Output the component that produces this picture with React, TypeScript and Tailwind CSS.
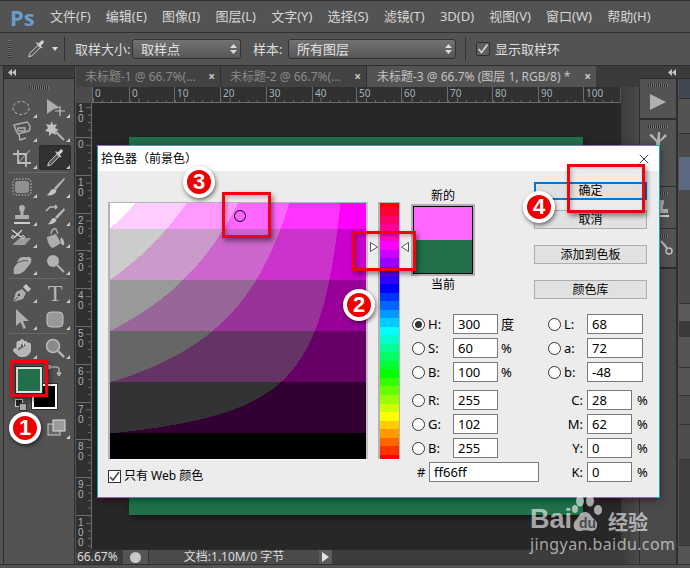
import type { ReactNode } from 'react';
import { Hand, X } from 'lucide-react';

const G = '#adadad';

const q = (v: number) => Math.round(v * 5) * 51;

// web-safe colour field for hue 300
const buildField = () => {
  const paths: Record<string, string> = {};
  for (let y = 0; y < 256; y++) {
    const v = 1 - (y + 0.5) / 256;
    let start = 0;
    let prev = '';
    for (let x = 0; x <= 256; x++) {
      const s = (x + 0.5) / 256;
      const c = x === 256 ? '' : `rgb(${q(v)},${q(v * (1 - s))},${q(v)})`;
      if (c !== prev) {
        if (prev) paths[prev] = (paths[prev] || '') + `M${start} ${y}h${x - start}v1h-${x - start}z`;
        start = x;
        prev = c;
      }
    }
  }
  return Object.entries(paths);
};

const hueRgb = (h: number) => {
  const f = (n: number) => {
    const k = (n + h / 60) % 6;
    return 1 - Math.max(0, Math.min(k, 4 - k, 1));
  };
  return `rgb(${q(f(5))},${q(f(3))},${q(f(1))})`;
};

const buildHue = () => {
  const runs: { y: number; h: number; c: string }[] = [];
  for (let y = 0; y < 256; y++) {
    const c = hueRgb(360 * (1 - (y + 0.5) / 256) % 360);
    const last = runs[runs.length - 1];
    if (last && last.c === c) last.h += 1;
    else runs.push({ y, h: 1, c });
  }
  return runs;
};

const field = buildField();
const hue = buildHue();

const Ico = ({ children, size = 22 }: { children: ReactNode; size?: number }) => (
  <svg width={size} height={size} viewBox="0 0 22 22">
    {children}
  </svg>
);

const Dropper = ({ size = 22 }: { size?: number }) => (
  <Ico size={size}>
    <path d="M3 19.5l1-3.5 9-9 2.5 2.5-9 9z" fill="#555" stroke="#ddd" strokeWidth="1" />
    <path d="M11.5 5l5.5 5.5 1.2-1.2-2-2 3-3a1.7 1.7 0 0 0-2.4-2.4l-3 3-2-2z" fill="#d0d0d0" />
  </Ico>
);

const icons: Record<string, ReactNode> = {
  marquee: (
    <Ico>
      <ellipse cx="10" cy="11" rx="8" ry="6.5" fill="none" stroke="#b8b8b8" strokeDasharray="3 2" />
    </Ico>
  ),
  move: (
    <Ico>
      <path d="M3 2v15l7-5 6-1z" fill={G} />
      <path d="M16 9v10M11 14h10" stroke="#c0c0c0" strokeWidth="1.2" />
    </Ico>
  ),
  lasso: (
    <Ico>
      <path d="M3 5l13-3c3 2 4 6 2 9l-11 3c-2-3-3-6-4-9z" fill="none" stroke={G} strokeWidth="1.5" />
      <path d="M7 8h7v3H9a2 2 0 0 1-2-3zM8 14l1 6 6-2" fill="none" stroke={G} strokeWidth="1.5" />
    </Ico>
  ),
  wand: (
    <Ico>
      <path d="M10 10l10 10" stroke={G} strokeWidth="2.4" />
      <path d="M8 1l1 4 4-1-2 4 4 2-4 1 1 4-4-2-3 3 0-4-4-1 3-3-2-4 4 1z" fill="#c0c0c0" />
    </Ico>
  ),
  crop: (
    <Ico>
      <path d="M7 3v13h13M2 7h13v13" fill="none" stroke="#bcbcbc" strokeWidth="1.8" />
      <path d="M7 16L19 3" stroke="#bcbcbc" strokeWidth="1" />
    </Ico>
  ),
  healing: (
    <Ico>
      <rect x="4" y="5" width="14" height="12" rx="3" fill="#909090" />
      <rect x="2" y="3" width="18" height="16" rx="3" fill="none" stroke="#c4c4c4" strokeDasharray="1.5 1.5" />
    </Ico>
  ),
  brush: (
    <Ico>
      <path d="M20 2L10 12l2 2L21 3z" fill="#b4b4b4" />
      <path d="M2 19c4 0 3-6 8-6 2 0 3 2 2 3-2 3-6 4-10 3z" fill="#c4c4c4" />
    </Ico>
  ),
  stamp: (
    <Ico>
      <path d="M8 4a3 3 0 0 1 6 0c0 2-1.5 3-1.5 5v2H18v4H4v-4h5.500V9C9.500 7 8 6 8 4z" fill={G} />
      <path d="M3 18h16v2H3z" fill="#cccccc" />
    </Ico>
  ),
  history: (
    <Ico>
      <path d="M20 4L11 13l2 2 8-9z" fill="#b4b4b4" />
      <path d="M3 20c4 0 3-6 7-6 2 0 3 2 2 3-1 2-5 4-9 3z" fill="#c4c4c4" />
      <path d="M13 3H6L2 7M13 3l-2-2M13 3l-2 2" fill="none" stroke="#bcbcbc" strokeWidth="1.4" />
    </Ico>
  ),
  eraser: (
    <Ico>
      <path d="M2 17l7-6h11l-6 7H3z" fill="#9c9c9c" />
      <path d="M1 3l9 7M11 3L4 10" stroke="#dcdcdc" strokeWidth="1.2" />
      <circle cx="2" cy="10" r="1.400" fill="none" stroke="#dcdcdc" />
      <circle cx="12" cy="10" r="1.400" fill="none" stroke="#dcdcdc" />
    </Ico>
  ),
  bucket: (
    <Ico>
      <path d="M3 10l9-3 5 9-8 5c-3 0-6-7-6-11z" fill={G} />
      <path d="M7 7c0-4 3-6 5-5l2 5" fill="none" stroke={G} strokeWidth="1.4" />
      <path d="M17 10c2 2 4 5 3 8h-2c-1-2-2-5-1-8z" fill="#bcbcbc" />
    </Ico>
  ),
  smudge: (
    <Ico>
      <path d="M3 21c-1-4 0-8 3-10 0-2 1-6 5-7h7c3 0 3 5 1 7l-4 5c-2 3-6 6-12 5z" fill={G} />
      <path d="M6 10c4-2 8-3 11-2" stroke="#555" fill="none" />
    </Ico>
  ),
  dodge: (
    <Ico>
      <circle cx="9" cy="8" r="6" fill="#b2b2b2" />
      <path d="M13 12l7 7" stroke={G} strokeWidth="2.2" />
    </Ico>
  ),
  pen: (
    <Ico>
      <path d="M2 20l3-10 6-3 4 4-3 6z" fill={G} />
      <path d="M12 5l3-3 5 5-3 3z" fill="#c4c4c4" />
      <path d="M2 20l5-5" stroke="#444" />
      <circle cx="8" cy="13" r="1.200" fill="#444" />
    </Ico>
  ),
  arrow: (
    <Ico>
      <path d="M5 1v17l4.500-4 3 7 2.500-1-3-7H18z" fill={G} />
    </Ico>
  ),
  shape: (
    <Ico>
      <rect x="3" y="4" width="16" height="15" rx="4" fill="#989898" stroke="#c4c4c4" />
    </Ico>
  ),
  zoom: (
    <Ico>
      <circle cx="9" cy="9" r="6.500" fill="#8a8a8a" stroke="#b8b8b8" strokeWidth="1.600" />
      <path d="M14 14l6 6" stroke="#b8b8b8" strokeWidth="2.400" />
    </Ico>
  ),
};

const Corner = () => (
  <span className="absolute right-[1px] bottom-[1px] w-0 h-0 border-l-[4px] border-l-transparent border-b-[4px] border-b-[#c8c8c8]" />
);

const Tool = ({ children, active }: { children: ReactNode; active?: boolean }) => (
  <div
    className={
      active
        ? 'relative w-[32px] h-full flex items-center justify-center rounded-[3px] bg-[#323232] shadow-[inset_0_0_2px_#1c1c1c]'
        : 'relative w-[32px] h-full flex items-center justify-center'
    }
  >
    {children}
    <Corner />
  </div>
);

const Collapse = () => (
  <svg width="8" height="7" viewBox="0 0 8 7">
    <path d="M4 0v7L0 3.500zM8 0v7L4 3.500z" fill="#c4c4c4" />
  </svg>
);

const Grip = () => (
  <div className="w-[20px] h-[3px] bg-[repeating-linear-gradient(90deg,#2e2e2e_0_1px,#777_1px_2px)]" />
);

const Sep = () => <div className="h-[1px] mx-[3px] my-[2px] bg-[#333] border-b border-[#666]" />;

const Toolbox = () => (
  <div className="w-[72px] ml-[3px] border-x border-[#2d2d2d] bg-[#535353] flex flex-col">
    <div className="h-[13px] bg-[#3b3b3b] flex items-center pl-[4px] border-b border-[#2b2b2b]">
      <Collapse />
    </div>
    <div className="h-[17px] flex justify-center items-center pr-[1px]">
      <Grip />
    </div>
    <div className="flex flex-col pl-[2px] pr-[3px]">
      <div className="flex justify-between h-[23px]"><Tool>{icons.marquee}</Tool><Tool>{icons.move}</Tool></div>
      <div className="flex justify-between h-[24px]"><Tool>{icons.lasso}</Tool><Tool>{icons.wand}</Tool></div>
      <div className="flex justify-between h-[25px] mt-[2px]">
        <Tool>{icons.crop}</Tool>
        <Tool active><Dropper size={20} /></Tool>
      </div>
      <Sep />
      <div className="flex justify-between h-[24px]"><Tool>{icons.healing}</Tool><Tool>{icons.brush}</Tool></div>
      <div className="flex justify-between h-[24px] mt-[4px]"><Tool>{icons.stamp}</Tool><Tool>{icons.history}</Tool></div>
      <div className="flex justify-between h-[22px]"><Tool>{icons.eraser}</Tool><Tool>{icons.bucket}</Tool></div>
      <div className="flex justify-between h-[24px] mt-[3px]"><Tool>{icons.smudge}</Tool><Tool>{icons.dodge}</Tool></div>
      <Sep />
      <div className="flex justify-between h-[23px]">
        <Tool>{icons.pen}</Tool>
        <Tool><span className="font-['Liberation_Serif',serif] text-[24px] leading-none text-[#b4b4b4]">T</span></Tool>
      </div>
      <div className="flex justify-between h-[24px] mt-[3px]"><Tool>{icons.arrow}</Tool><Tool>{icons.shape}</Tool></div>
      <Sep />
      <div className="flex justify-between h-[24px]">
        <Tool><Hand size={20} fill="#b4b4b4" stroke="#d4d4d4" strokeWidth={1.1} /></Tool>
        <Tool>{icons.zoom}</Tool>
      </div>
    </div>
    {/* colour chips overlap each other */}
    <div className="relative h-[78px]">
      <div className="absolute left-[28px] top-[24px] w-[25px] h-[25px] bg-black border-2 border-white outline outline-[#2d2d2d]" />
      <div className="absolute left-[12px] top-[7px] w-[26px] h-[26px] bg-[#21704a] border-2 border-[#e4e4e4] outline outline-[#2d2d2d]" />
      <svg className="absolute left-[42px] top-[4px]" width="16" height="14" viewBox="0 0 16 14">
        <path d="M3 3h8a2 2 0 0 1 2 2v5M1 3l3-2v4zM11 9l2 3 2-3z" fill="none" stroke="#d0d0d0" />
      </svg>
      <div className="absolute left-[11px] top-[39px] w-[8px] h-[8px] bg-[#222] border border-[#ccc]" />
      <div className="absolute left-[15px] top-[43px] w-[8px] h-[8px] bg-[#aaa] border border-[#333]" />
      <svg className="absolute left-[42px] top-[59px]" width="24" height="20" viewBox="0 0 24 20">
        <rect x="2" y="5" width="12" height="11" fill="#666" stroke="#ccc" />
        <rect x="7" y="1" width="12" height="11" fill="#9a9a9a" stroke="#ddd" />
        <path d="M24 16v4h-4z" fill="#d0d0d0" />
      </svg>
    </div>
  </div>
);

const topTicks = [
  { x: 0, t: '0' }, { x: 37, t: '0' }, { x: 82, t: '10' }, { x: 128, t: '20' }, { x: 174, t: '30' }, { x: 220, t: '40' },
  { x: 264, t: '50' }, { x: 309, t: '60' }, { x: 355, t: '70' }, { x: 400, t: '80' }, { x: 446, t: '90' }, { x: 491, t: '100' },
];

const RulerTop = () => (
  <svg width="528" height="16" className="block bg-[#303030]">
    <path d="M0 15.500H528" stroke="#6c6c6c" />
    {Array.from({ length: 59 }).map((_, i) => (
      <path key={i} d={`M${i * 9.1 + 1.500} 15V${i % 5 === 0 ? 11 : 13}`} stroke="#6c6c6c" />
    ))}
    {topTicks.map((m) => (
      <g key={m.x}>
        <path d={`M${m.x + 0.500} 0V16`} stroke="#6c6c6c" />
        <text x={m.x + 3} y="10" fontSize="10" fill="#a3b0bc">{m.t}</text>
      </g>
    ))}
  </svg>
);

const leftTicks = [
  { y: -2, t: '10' }, { y: 34, t: '0' }, { y: 72, t: '10' }, { y: 110, t: '20' }, { y: 147, t: '30' }, { y: 185, t: '40' },
  { y: 223, t: '50' }, { y: 261, t: '60' }, { y: 299, t: '70' }, { y: 336, t: '80' }, { y: 374, t: '90' }, { y: 412, t: '100' },
];

const RulerLeft = () => (
  <svg width="16" height="447" className="block bg-[#303030]">
    <path d="M15.500 0V447" stroke="#6c6c6c" />
    {Array.from({ length: 60 }).map((_, i) => (
      <path key={i} d={`M15 ${i * 7.56 + 4.500}H${i % 5 === 0 ? 10 : 12}`} stroke="#6c6c6c" />
    ))}
    {leftTicks.map((m) => (
      <g key={m.y}>
        <path d={`M0 ${m.y + 0.500}H16`} stroke="#6c6c6c" />
        <text fontSize="10" fill="#a3b0bc" fontFamily="Liberation Sans">
          {m.t.split('').map((d, i) => (
            <tspan key={i} x="2" y={m.y + 11 + i * 10}>{d}</tspan>
          ))}
        </text>
      </g>
    ))}
  </svg>
);

const TabClose = () => <span className="text-[12px] leading-none font-bold text-[#c8c8c8]">×</span>;

const DocArea = () => (
  <div className="w-[564px] flex flex-col ml-[1px]">
    <div className="h-[21px] flex bg-[#3b3b3b] text-[12px] leading-none">
      <div className="w-[145px] flex items-center justify-between pl-[9px] pr-[5px] bg-[#424242] border-r border-[#2d2d2d] text-[#8a8a8a]">
        <span className="whitespace-nowrap">未标题-1 @ 66.7%(...</span><TabClose />
      </div>
      <div className="w-[146px] flex items-center justify-between pl-[9px] pr-[5px] bg-[#424242] border-r border-[#2d2d2d] text-[#8a8a8a]">
        <span className="whitespace-nowrap">未标题-2 @ 66.7%(...</span><TabClose />
      </div>
      <div className="w-[229px] flex items-center justify-between pl-[10px] pr-[5px] bg-[#535353] text-[#c4c4c4]">
        <span className="whitespace-nowrap">未标题-3 @ 66.7% (图层 1, RGB/8) *</span><TabClose />
      </div>
    </div>
    <div className="flex-1 flex min-h-0">
      <div className="w-[545px] flex flex-col">
        <div className="flex">
          <div className="w-[16px] h-[16px] bg-[#4b4b4b] bg-[radial-gradient(#6a6a6a_0.5px,transparent_0.5px)] bg-[length:2px_2px]" />
          <RulerTop />
        </div>
        <div className="flex flex-1 min-h-0">
          <RulerLeft />
          <div className="flex-1 bg-[#272727] pl-[37px] pt-[34px]">
            <div className="w-[454px] h-[378px] bg-[#21704a] shadow-[2px_3px_6px_rgba(0,0,0,0.5)]" />
          </div>
        </div>
        <div className="h-[15px] flex items-center bg-[#3c3c3c] text-[12px] leading-none text-[#dcdcdc] border-t border-[#2d2d2d]">
          <div className="w-[47px] pl-[1px] bg-[#3a3a3a] h-full flex items-center">66.67%</div>
          <div className="w-[25px] h-full flex items-center justify-center bg-[#555]">
            <span className="w-[11px] h-[11px] rounded-full bg-[#c8c8c8] block" />
          </div>
          <div className="w-[171px] h-full flex items-center justify-center border-l border-[#333] bg-[#4a4a4a] whitespace-nowrap">文档:1.10M/0 字节</div>
          <div className="w-[13px] h-full flex items-center justify-center bg-[#5c5c5c]">
            <span className="w-0 h-0 border-y-[5px] border-y-transparent border-l-[7px] border-l-[#e4e4e4]" />
          </div>
        </div>
      </div>
      <div className="w-[19px] bg-gradient-to-r from-[#3b3b3b] to-[#4b4b4b] border-r border-[#2d2d2d]" />
    </div>
  </div>
);

const RightPanels = () => (
  <div className="flex-1 flex flex-col">
    <div className="h-[13px] bg-[#3b3b3b] flex items-center pl-[28px] border-b border-[#2b2b2b]">
      <Collapse />
    </div>
    <div className="flex-1 flex">
      <div className="w-[38px] flex flex-col border-r-2 border-[#2e2e2e] bg-[#4a4a4a]">
        <div className="h-[41px] bg-[#535353] border-b-2 border-[#2e2e2e] flex flex-col items-center pt-[5px]">
          <Grip />
          <svg className="mt-[5px]" width="20" height="20" viewBox="0 0 20 20"><path d="M2 2l16 8-16 8z" fill="#b0b0b0" /></svg>
        </div>
        <div className="h-[67px] bg-[#535353] border-b border-[#2e2e2e] flex flex-col items-center pt-[5px]">
          <Grip />
          <svg className="mt-[3px]" width="22" height="22" viewBox="0 0 22 22">
            <path d="M9 20V11L2 4l3-1 5 6 1-8 2 0 0 8 5-6 2 2-7 6v9z" fill="#b4b4b4" />
          </svg>
        </div>
        <div className="h-[42px] bg-[#535353] border-b border-[#2e2e2e] flex flex-col items-center pt-[5px]">
          <Grip />
          <svg className="mt-[5px] ml-[6px]" width="22" height="22" viewBox="0 0 22 22"><path d="M8 2a3 3 0 0 1 6 0c0 2-1 3-1 5v2h5v4H4V9h5V7C9 5 8 4 8 2z" fill={G} /><path d="M3 15h16v2H3z" fill="#ccc" /></svg>
        </div>
        <div className="h-[40px] bg-[#535353] border-b-2 border-[#2e2e2e] flex flex-col items-center pt-[5px]">
          <Grip />
          <svg className="mt-[3px] ml-[18px]" width="14" height="16" viewBox="0 0 14 16"><circle cx="9" cy="11" r="3" fill="none" stroke="#bbb" strokeWidth="1.500" /><path d="M1 1l6 7" stroke="#bbb" strokeWidth="2" /></svg>
        </div>
        <div className="flex-1" />
      </div>
      <div className="flex-1 ml-[1px] flex flex-col bg-[#4a4a4a]">
        <div className="h-[19px] bg-[#3f4752]" />
        <div className="h-[36px] bg-[#535353] border-y border-[#2e2e2e]" />
        <div className="h-[23px]" />
        <div className="h-[33px] bg-[#5b6a80]" />
        <div className="h-[113px]" />
        <div className="h-[18px] bg-[#5a5a5a] border-t border-[#333]" />
        <div className="h-[16px] bg-[#3a3a3a]" />
        <div className="h-[31px] bg-[#555] border-b border-[#333]" />
        <div className="h-[28px] bg-[#555] border-b border-[#333]" />
        <div className="h-[29px] bg-[#4d4d4d] border-b border-[#333]" />
        <div className="h-[35px] bg-[#4d4d4d] border-b border-[#333]" />
        <div className="h-[85px] bg-[#3e3e3e]" />
        <div className="flex-1 bg-[#555] border-t border-[#333]" />
      </div>
    </div>
  </div>
);

const Select = ({ w, label }: { w: string; label: string }) => (
  <div className={`${w} h-[20px] flex items-center justify-between pl-[8px] pr-[3px] rounded-[3px] border border-[#333] bg-gradient-to-b from-[#727272] to-[#565656] text-[#e0e0e0]`}>
    <span>{label}</span>
    <svg width="7" height="10" viewBox="0 0 7 10"><path d="M0 4l3.500-4 3.500 4zM0 6l3.500 4 3.500-4z" fill="#dcdcdc" /></svg>
  </div>
);

const Radio = ({ on }: { on?: boolean }) => (
  <span className="w-[13px] h-[13px] rounded-full border border-[#333] bg-white flex items-center justify-center shrink-0">
    {on && <span className="w-[7px] h-[7px] rounded-full bg-[#333]" />}
  </span>
);

const Num = ({ v, w }: { v: string; w: string }) => (
  <div className={`${w} h-[20px] border border-[#7a7a7a] bg-white text-[13px] leading-[19px] pl-[4px] shrink-0`}>{v}</div>
);

const RadioRow = ({ k, v, unit, on }: { k: string; v: string; unit?: string; on?: boolean }) => (
  <div className="flex items-center h-[20px] mb-[4px]">
    <Radio on={on} />
    <span className="w-[28px] pl-[3px] text-[13px] leading-none">{k}</span>
    <Num v={v} w="w-[45px]" />
    {unit && <span className="ml-[3px] text-[13px] leading-none">{unit}</span>}
  </div>
);

const LabRow = ({ k, v }: { k: string; v: string }) => (
  <div className="flex items-center h-[20px] mb-[4px]">
    <Radio />
    <span className="w-[26px] pl-[3px] text-[13px] leading-none">{k}</span>
    <Num v={v} w="w-[56px]" />
  </div>
);

const CmykRow = ({ k, v }: { k: string; v: string }) => (
  <div className="flex items-center h-[20px] mb-[4px]">
    <span className="w-[39px] pr-[4px] text-right text-[13px] leading-none">{k}</span>
    <Num v={v} w="w-[45px]" />
    <span className="ml-[5px] text-[13px] leading-none">%</span>
  </div>
);

const Btn = ({ children, primary, cls }: { children: ReactNode; primary?: boolean; cls: string }) => (
  <div
    className={`${cls} w-[113px] flex items-center justify-center bg-[#e1e1e1] text-[12px] leading-none text-black ${
      primary ? 'h-[18px] border-2 border-[#0078d7]' : 'h-[19px] border border-[#adadad]'
    }`}
  >
    {children}
  </div>
);

const ColorDialog = () => (
  <div className="absolute left-[97px] top-[145px] w-[563px] h-[353px] border border-[#17a9b8] bg-[#ececec] text-black shadow-[0_2px_8px_rgba(0,0,0,0.45)] flex flex-col">
    <div className="h-[25px] shrink-0 bg-white flex items-center justify-between pl-[3px] pr-[7px] text-[12px] leading-none">
      <span>拾色器（前景色）</span>
      <X size={16} strokeWidth={1.2} className="text-[#111]" />
    </div>
    <div className="flex-1 flex pl-[10px]">
      <div className="w-[260px] pt-[31px]">
        <div className="relative w-[260px] h-[258px] border-2 border-[#b4b4b4] border-r-[#c4c4c4] border-b-[#fafafa] border-t-[1px]">
          <svg width="256" height="256" className="block" shapeRendering="crispEdges">
            {field.map(([c, d]) => <path key={c} d={d} fill={c} />)}
          </svg>
          <span className="absolute left-[124px] top-[7px] w-[12px] h-[12px] rounded-full border border-black" />
        </div>
        <div className="flex items-center mt-[9px] h-[14px] text-[12px] leading-none">
          <span className="w-[13px] h-[13px] border border-[#333] bg-white flex items-center justify-center">
            <svg width="11" height="11" viewBox="0 0 11 11"><path d="M1 6l3 3 6-8" fill="none" stroke="#444" strokeWidth="1.500" /></svg>
          </span>
          <span className="ml-[3px] whitespace-pre">只有 Web 颜色</span>
        </div>
      </div>

      <div className="relative w-[22px] ml-[10px] mt-[31px] h-[258px] border-2 border-[#b4b4b4] border-t-[1px] border-b-[#fafafa] border-r-[1px]">
        <svg width="19" height="256" className="block" shapeRendering="crispEdges">
          {hue.map((r) => <rect key={r.y} x="0" y={r.y} width="19" height={r.h} fill={r.c} />)}
        </svg>
        <svg className="absolute left-[-11px] top-[38px]" width="10" height="12" viewBox="0 0 10 12"><path d="M1.500 1.500L8.500 6l-7 4.500z" fill="#fff" stroke="#555" /></svg>
        <svg className="absolute left-[20px] top-[38px]" width="10" height="12" viewBox="0 0 10 12"><path d="M8.500 1.500L1.500 6l7 4.500z" fill="#fff" stroke="#555" /></svg>
      </div>

      <div className="flex-1 pl-[12px] flex flex-col">
        <div className="flex h-[143px]">
          <div className="w-[62px] pt-[19px] flex flex-col items-center text-[12px] leading-none">
            <span>新的</span>
            <div className="mt-[4px] w-[60px] h-[68px] border border-black flex flex-col outline-2 outline-[#b0b0b0]">
              <div className="h-[33px] bg-[#ff66ff]" />
              <div className="flex-1 bg-[#21704a]" />
            </div>
            <span className="mt-[5px]">当前</span>
          </div>
          <div className="ml-[60px] pt-[11px] flex flex-col">
            <Btn primary cls="">确定</Btn>
            <Btn cls="mt-[10px]">取消</Btn>
            <Btn cls="mt-[16px]">添加到色板</Btn>
            <Btn cls="mt-[16px]">颜色库</Btn>
          </div>
        </div>
        <div className="flex">
          <div className="w-[136px]">
            <RadioRow k="H:" v="300" unit="度" on />
            <RadioRow k="S:" v="60" unit="%" />
            <RadioRow k="B:" v="100" unit="%" />
            <div className="h-[4px]" />
            <RadioRow k="R:" v="255" />
            <RadioRow k="G:" v="102" />
            <RadioRow k="B:" v="255" />
            <div className="flex items-center h-[20px] mt-[4px]">
              <span className="w-[17px] pl-[5px] text-[13px] leading-none">#</span>
              <Num v="ff66ff" w="w-[110px]" />
            </div>
          </div>
          <div>
            <LabRow k="L:" v="68" />
            <LabRow k="a:" v="72" />
            <LabRow k="b:" v="-48" />
            <div className="h-[4px]" />
            <CmykRow k="C:" v="28" />
            <CmykRow k="M:" v="62" />
            <CmykRow k="Y:" v="0" />
            <CmykRow k="K:" v="0" />
          </div>
        </div>
      </div>
    </div>
  </div>
);

const boxCls = 'absolute border-[3px] border-[#ee0410] shadow-[2px_3px_5px_rgba(0,0,0,0.45),inset_2px_2px_4px_rgba(0,0,0,0.25)]';
const badgeCls =
  "absolute w-[32px] h-[32px] rounded-full bg-[#ee0000] border-[4px] border-white shadow-[1px_2px_4px_rgba(0,0,0,0.55)] flex items-center justify-center text-white font-['Liberation_Sans',sans-serif] font-bold text-[22px] leading-none";

const Watermark = () => (
  <div className="absolute left-[530px] top-[495px] w-[125px] h-[60px] text-white/60 font-['Liberation_Sans','Noto_Sans_CJK_SC',sans-serif] font-bold">
    <div className="flex items-end h-[40px]">
      <span className="text-[27px] leading-none pb-[2px]">Bai</span>
      <svg width="36" height="40" viewBox="0 0 36 40" className="shrink-0">
        <g fill="rgba(255,255,255,0.6)">
          <ellipse cx="8" cy="6" rx="4" ry="5.500" />
          <ellipse cx="18" cy="6" rx="4" ry="5.500" />
          <ellipse cx="26" cy="15" rx="4" ry="5" />
          <ellipse cx="3" cy="14" rx="3" ry="4" />
          <path d="M13 17c5 0 6 5 11 9 3 4 0 11-5 10-4-1-7-1-11 0-6 1-8-6-5-10 4-3 4-9 10-9z" />
        </g>
        <text x="7" y="33" fontSize="14" fill="#4a4a4a" fontFamily="Liberation Sans">du</text>
      </svg>
      <span className="text-[20px] leading-none pb-[2px] whitespace-nowrap">经验</span>
    </div>
    <div className="text-[16px] leading-none mt-[1px] font-normal tracking-[0.4px] font-['Noto_Sans',sans-serif] whitespace-nowrap">jingyan.baidu.com</div>
  </div>
);

export default function App() {
  return (
    <div className="relative w-[690px] h-[568px] overflow-hidden bg-[#535353] flex flex-col font-['Noto_Sans','Noto_Sans_CJK_SC',sans-serif]">
      <div className="h-[33px] shrink-0 flex items-center border-t border-[#2e2e2e] border-b border-b-[#2e2e2e] text-[13px] leading-none text-[#d6d6d6]">
        <span className="ml-[10px] w-[40px] font-['Open_Sans',sans-serif] font-bold text-[22px] text-[#6b9dcc]">Ps</span>
        <div className="flex gap-[15.2px] whitespace-nowrap">
          <span>文件(F)</span><span>编辑(E)</span><span>图像(I)</span><span>图层(L)</span><span>文字(Y)</span>
          <span>选择(S)</span><span>滤镜(T)</span><span>3D(D)</span><span>视图(V)</span><span>窗口(W)</span><span>帮助(H)</span>
        </div>
      </div>

      <div className="h-[33px] shrink-0 flex items-center border-b border-[#2e2e2e] text-[13px] leading-none text-[#dedede]">
        <div className="ml-[8px] w-[3px] h-[18px] bg-[repeating-linear-gradient(0deg,#2e2e2e_0_1px,#777_1px_2px)]" />
        <div className="ml-[15px]"><Dropper size={20} /></div>
        <span className="ml-[6px] w-0 h-0 border-x-[3.5px] border-x-transparent border-t-[4px] border-t-[#dcdcdc]" />
        <div className="ml-[6px] w-[1px] h-[24px] bg-[#333]" />
        <span className="ml-[10px] w-[57px] whitespace-nowrap">取样大小:</span>
        <Select w="w-[109px]" label="取样点" />
        <span className="ml-[12px] w-[35px] whitespace-nowrap">样本:</span>
        <Select w="w-[168px]" label="所有图层" />
        <div className="ml-[9px] w-[1px] h-[24px] bg-[#333]" />
        <span className="ml-[10px] w-[14px] h-[14px] rounded-[2px] border border-[#2e2e2e] bg-[#5f5f5f] flex items-center justify-center">
          <svg width="12" height="12" viewBox="0 0 12 12"><path d="M1.500 6l3 3.500 6-8" fill="none" stroke="#d8d8d8" strokeWidth="1.600" /></svg>
        </span>
        <span className="ml-[5px] whitespace-nowrap">显示取样环</span>
      </div>

      <div className="flex-1 flex min-h-0 mb-[3px] border-b border-[#2e2e2e]">
        <Toolbox />
        <DocArea />
        <RightPanels />
      </div>

      <ColorDialog />

      <div className={`${boxCls} left-[10px] top-[360px] w-[38px] h-[37px]`} />
      <div className={`${boxCls} left-[352px] top-[231px] w-[64px] h-[40px]`} />
      <div className={`${boxCls} left-[222px] top-[192px] w-[49px] h-[46px]`} />
      <div className={`${boxCls} left-[567px] top-[164px] w-[78px] h-[49px]`} />

      <div className={`${badgeCls} left-[9px] top-[412px]`}>1</div>
      <div className={`${badgeCls} left-[343px] top-[289px]`}>2</div>
      <div className={`${badgeCls} left-[183px] top-[166px]`}>3</div>
      <div className={`${badgeCls} left-[523px] top-[191px]`}>4</div>

      <Watermark />
    </div>
  );
}
